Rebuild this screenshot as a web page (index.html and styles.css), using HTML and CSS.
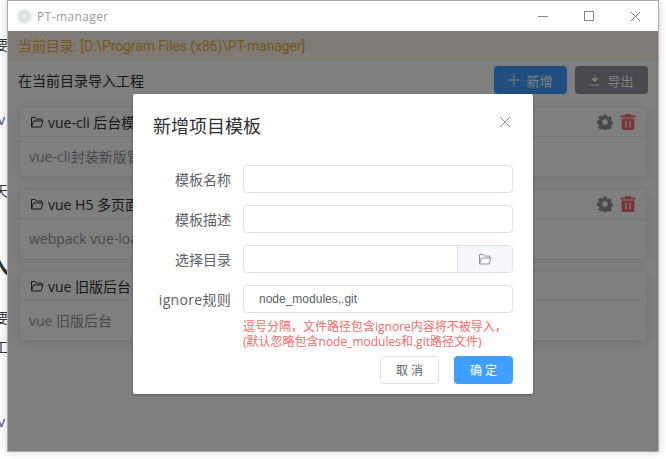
FILE: index.html
```html
<!DOCTYPE html>
<html lang="en">
<head>
    <title>PT-manager</title>
    <meta charset="UTF-8" />
    <meta name="viewport" content="width=device-width, initial-scale=1.0" />
    <link rel="stylesheet" href="styles.css">
</head>
<body>
    <svg class="icon-defs" width="0" height="0">
        <symbol id="i-folder" viewBox="0 0 14 14">
            <path d="M1.5 12V2.5h3.7l1.2 1.6h5.4V6M1.5 12h9.6L13 6H3.4L1.5 12z" fill="none" stroke="currentColor" stroke-width="1" />
        </symbol>
        <symbol id="i-gear" viewBox="0 0 16 16">
            <path fill-rule="evenodd" fill="currentColor" d="M6.6.5h2.8l.4 2 1.3.6 1.8-1.1 2 2-1.1 1.8.6 1.3 2 .4v2.8l-2 .4-.6 1.3 1.1 1.8-2 2-1.8-1.1-1.3.6-.4 2H6.6l-.4-2-1.3-.6L3.100 15.400l-2-2 1.100-1.800-.6-1.300-2-.4V6.900l2-.4.6-1.300L1.100 3.400l2-2 1.800 1.100 1.300-.6zM8 5.300a2.700 2.700 0 1 0 0 5.400 2.700 2.700 0 0 0 0-5.400z" />
        </symbol>
        <symbol id="i-trash" viewBox="0 0 16 16">
            <path fill-rule="evenodd" fill="currentColor" d="M5.500 0h5l.8 1.600H15.500v2H.5v-2h4.200zM1.700 4.600h12.600v10a1.300 1.300 0 0 1-1.300 1.300H3a1.300 1.300 0 0 1-1.300-1.300zM5.300 7v6.500h1.300V7zm4.100 0v6.500h1.300V7z" />
        </symbol>
        <symbol id="i-close" viewBox="0 0 12 12">
            <path d="M1 1l10 10M11 1L1 11" fill="none" stroke="currentColor" stroke-width="1" />
        </symbol>
    </svg>

    <div class="behind">
        <span class="behind-a">要</span>
        <span class="behind-b">v</span>
        <span class="behind-c">天</span>
        <span class="behind-d">入</span>
        <span class="behind-e">要</span>
        <span class="behind-f">工</span>
        <span class="behind-g">v</span>
    </div>

    <div class="window">
        <div class="titlebar">
            <svg class="app-logo" width="15" height="15" viewBox="0 0 15 15">
                <circle cx="7.500" cy="7.500" r="7.500" fill="#e6e9e7" />
                <circle cx="7.500" cy="7.500" r="4" fill="none" stroke="#c6ddd6" stroke-width="2" stroke-dasharray="2 1" />
            </svg>
            <span class="app-name">PT-manager</span>
            <div class="win-controls">
                <span class="win-btn"><span class="win-min"></span></span>
                <span class="win-btn"><span class="win-max"></span></span>
                <span class="win-btn"><svg width="11" height="11"><use href="#i-close" /></svg></span>
            </div>
        </div>

        <div class="app-body">
            <div class="current-dir">当前目录: [D:\Program Files (x86)\PT-manager]</div>

            <div class="toolbar">
                <span class="toolbar-title">在当前目录导入工程</span>
                <div class="toolbar-btns">
                    <button class="btn btn-primary">
                        <svg width="12" height="12" viewBox="0 0 12 12"><path d="M6 .5v11M.5 6h11" stroke="currentColor" fill="none" /></svg>
                        新增
                    </button>
                    <button class="btn btn-muted">
                        <svg width="12" height="12" viewBox="0 0 12 12"><path d="M6 1v6.500M3 4.800l3 3 3-3z" stroke="currentColor" fill="currentColor" /><path d="M1.500 11h9" stroke="currentColor" fill="none" /></svg>
                        导出
                    </button>
                </div>
            </div>

            <div class="cards">
                <div class="card">
                    <div class="card-head">
                        <svg class="folder" width="14" height="14"><use href="#i-folder" /></svg>
                        <span class="card-title">vue-cli 后台模板</span>
                        <svg class="gear" width="16" height="16"><use href="#i-gear" /></svg>
                        <svg class="trash" width="16" height="16"><use href="#i-trash" /></svg>
                    </div>
                    <div class="card-text">vue-cli封装新版管理后台模板，适用于大部分中后台系统项目</div>
                </div>
                <div class="card">
                    <div class="card-head">
                        <svg class="folder" width="14" height="14"><use href="#i-folder" /></svg>
                        <span class="card-title">vue H5 多页面模板</span>
                        <svg class="gear" width="16" height="16"><use href="#i-gear" /></svg>
                        <svg class="trash" width="16" height="16"><use href="#i-trash" /></svg>
                    </div>
                    <div class="card-text">webpack vue-loader 多页面</div>
                </div>
                <div class="card">
                    <div class="card-head">
                        <svg class="folder" width="14" height="14"><use href="#i-folder" /></svg>
                        <span class="card-title">vue 旧版后台</span>
                    </div>
                    <div class="card-text">vue 旧版后台</div>
                </div>
            </div>

            <div class="overlay">
                <div class="dialog">
                    <div class="dialog-head">
                        <span class="dialog-title">新增项目模板</span>
                        <svg class="dialog-close" width="12" height="12"><use href="#i-close" /></svg>
                    </div>
                    <div class="form">
                        <div class="form-row">
                            <label class="form-label">模板名称</label>
                            <div class="input"></div>
                        </div>
                        <div class="form-row">
                            <label class="form-label">模板描述</label>
                            <div class="input"></div>
                        </div>
                        <div class="form-row">
                            <label class="form-label">选择目录</label>
                            <div class="input-group">
                                <div class="input-main"></div>
                                <div class="input-append"><svg width="14" height="14"><use href="#i-folder" /></svg></div>
                            </div>
                        </div>
                        <div class="form-row">
                            <label class="form-label form-label-latin">ignore规则</label>
                            <div class="input input-filled">node_modules,.git</div>
                        </div>
                        <div class="form-hint">逗号分隔，文件路径包含ignore内容将不被导入，<br>(默认忽略包含node_modules和.git路径文件)</div>
                    </div>
                    <div class="dialog-foot">
                        <button class="btn btn-plain">取 消</button>
                        <button class="btn btn-confirm">确 定</button>
                    </div>
                </div>
            </div>
        </div>
    </div>
</body>
</html>
```

FILE: styles.css
```css
* {
    box-sizing: border-box;
}

html, body {
    height: 100%;
}

body {
    margin: 0;
    background: #fff;
    overflow: hidden;
    position: relative;
    font-family: "Open Sans", "Noto Sans CJK SC", sans-serif;
    font-size: 14px;
}

.icon-defs {
    position: absolute;
}

/* text of the page behind the window */
.behind span {
    position: absolute;
    left: -6px;
    color: #333;
    line-height: 20px;
}

.behind-a { top: 35px; }
.behind-b { top: 110px; left: -2px !important; color: #445 !important; }
.behind-c { top: 181px; }
.behind-d { top: 250px; left: -14px !important; font-size: 24px; line-height: 30px !important; font-weight: 700; }
.behind-e { top: 308px; }
.behind-f { top: 337px; }
.behind-g { top: 412px; left: -2px !important; color: #445 !important; }

.window {
    position: absolute;
    left: 7px;
    top: 0;
    width: 652px;
    height: 452px;
    border: 1px solid #aaa;
    box-shadow: 0 0 8px rgba(0, 0, 0, 0.2);
    display: flex;
    flex-direction: column;
    background: #fff;
}

.titlebar {
    height: 30px;
    flex: none;
    display: flex;
    align-items: center;
    padding-left: 9px;
    background: #fff;
}

.app-name {
    margin-left: 5px;
    font-size: 12px;
    letter-spacing: 0.4px;
    color: #9a9a9a;
}

.win-controls {
    margin-left: auto;
    display: flex;
    color: #777;
}

.win-btn {
    width: 46px;
    height: 30px;
    display: flex;
    align-items: center;
    justify-content: center;
}

.win-min {
    width: 10px;
    height: 1px;
    background: #888;
}

.win-max {
    width: 10px;
    height: 10px;
    border: 1px solid #888;
}

.app-body {
    flex: 1;
    position: relative;
    color: #303133;
}

.current-dir {
    height: 30px;
    padding-left: 10px;
    line-height: 30px;
    background: #fdf6ec;
    color: #f0a93f;
    font-family: Roboto, "Noto Sans CJK SC", sans-serif;
    letter-spacing: -0.1px;
}

.toolbar {
    display: flex;
    justify-content: space-between;
    align-items: center;
    padding: 5px 10px 0;
}

.toolbar-btns {
    display: flex;
    gap: 8px;
}

.btn {
    height: 28px;
    width: 73px;
    border: none;
    border-radius: 4px;
    font-family: inherit;
    font-size: 13px;
    display: flex;
    align-items: center;
    justify-content: center;
    gap: 6px;
    padding: 0;
}

.btn-primary {
    background: #409eff;
    color: #fff;
}

.btn-muted {
    background: #909399;
    color: #fff;
}

.cards {
    padding: 13px 11px 0;
    display: flex;
    flex-direction: column;
    gap: 12px;
}

.card {
    height: 70px;
    background: #fff;
    border: 1px solid #ebeef5;
    border-radius: 4px;
    box-shadow: 0 2px 12px rgba(0, 0, 0, 0.1);
}

.card-head {
    height: 29px;
    padding: 0 10px;
    display: flex;
    align-items: center;
    border-bottom: 1px solid #ebeef5;
}

.folder {
    margin-right: 4px;
}

.gear {
    margin-left: auto;
    color: #909399;
}

.trash {
    margin-left: 7px;
    color: #f56c6c;
}

.card-text {
    padding: 0 9px;
    line-height: 40px;
    color: #909399;
}

.overlay {
    position: absolute;
    left: 0;
    right: 0;
    top: 0;
    bottom: 0;
    background: rgba(0, 0, 0, 0.5);
    padding: 63px 0 0 125px;
}

.dialog {
    width: 400px;
    height: 300px;
    background: #fff;
    border-radius: 2px;
    box-shadow: 0 1px 3px rgba(0, 0, 0, 0.3);
    padding: 20px;
}

.dialog-head {
    display: flex;
    align-items: flex-start;
    justify-content: space-between;
    height: 51px;
}

.dialog-title {
    font-size: 18px;
    line-height: 24px;
    color: #303133;
}

.dialog-close {
    color: #909399;
    margin: 2px 0 0;
    transform: translateX(-2px);
}

.form {
    display: flex;
    flex-direction: column;
    gap: 12px;
}

.form-row {
    display: flex;
    align-items: center;
    height: 28px;
}

.form-label {
    width: 78px;
    margin-right: 12px;
    text-align: right;
    color: #606266;
    flex: none;
}

.form-label-latin {
    letter-spacing: 0.3px;
}

.input {
    flex: 1;
    height: 28px;
    border: 1px solid #dcdfe6;
    border-radius: 4px;
}

.input-filled {
    padding-left: 15px;
    line-height: 26px;
    font-family: "Liberation Sans", sans-serif;
    font-size: 12px;
    color: #606266;
}

.input-group {
    flex: 1;
    height: 28px;
    display: flex;
    border: 1px solid #dcdfe6;
    border-radius: 4px;
}

.input-main {
    flex: 1;
}

.input-append {
    width: 55px;
    background: #f5f7fa;
    border-left: 1px solid #dcdfe6;
    border-radius: 0 3px 3px 0;
    color: #909399;
    display: flex;
    align-items: center;
    justify-content: center;
}

.form-hint {
    margin: -6px 0 0 90px;
    font-size: 12px;
    line-height: 15px;
    color: #f56c6c;
}

.dialog-foot {
    display: flex;
    justify-content: flex-end;
    gap: 15px;
    margin-top: 7px;
}

.btn-plain {
    width: 59px;
    background: #fff;
    border: 1px solid #dcdfe6;
    color: #606266;
    font-size: 12px;
}

.btn-confirm {
    width: 59px;
    background: #409eff;
    color: #fff;
    font-size: 12px;
}
```
